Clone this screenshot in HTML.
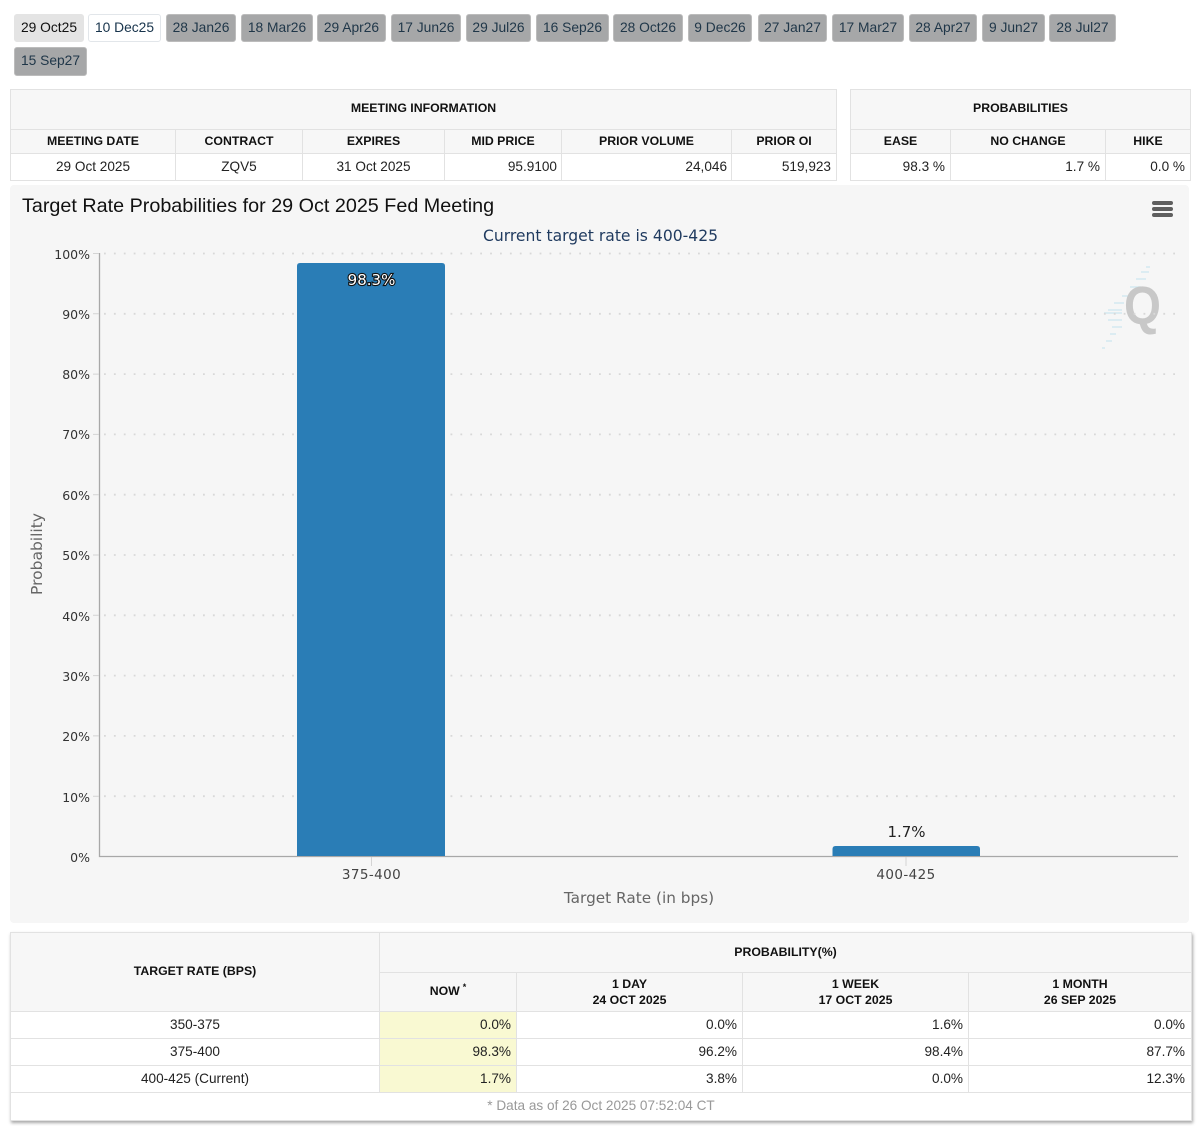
<!DOCTYPE html>
<html><head><meta charset="utf-8"><style>
html,body{margin:0;padding:0;background:#fff;width:1200px;height:1126px;overflow:hidden;font-family:"Liberation Sans",sans-serif;color:#111}
.t{position:absolute;box-sizing:border-box;height:28px;top:14px;border:1px solid #bcbcbc;border-radius:3px;background:#a6a7a8;color:#1f3648;font-size:13.8px;line-height:25px;text-align:center;white-space:nowrap}
.b{position:absolute;box-sizing:border-box;border:1px solid #e2e2e2;white-space:nowrap}
.h{background:#f7f7f7;font-weight:bold;font-size:12.3px;color:#111;text-align:center}
.d{background:#fff;font-size:13.6px;color:#222}
.r{text-align:right;padding-right:5px}
.c{text-align:center}
.y{background:#f9f9d2}
</style></head><body>
<div class="t" style="left:14px;width:70px;background:#e4e4e4;border-color:#e4e4e4;color:#111">29 Oct25</div>
<div class="t" style="left:88px;width:73px;background:#fff;border-color:#e2e6ea;color:#18344c">10 Dec25</div>
<div class="t" style="left:166px;width:70px">28 Jan26</div>
<div class="t" style="left:241px;width:72px">18 Mar26</div>
<div class="t" style="left:317px;width:69px">29 Apr26</div>
<div class="t" style="left:391px;width:70px">17 Jun26</div>
<div class="t" style="left:466px;width:65px">29 Jul26</div>
<div class="t" style="left:536px;width:73px">16 Sep26</div>
<div class="t" style="left:613px;width:70px">28 Oct26</div>
<div class="t" style="left:688px;width:64px">9 Dec26</div>
<div class="t" style="left:758px;width:69px">27 Jan27</div>
<div class="t" style="left:832px;width:72px">17 Mar27</div>
<div class="t" style="left:909px;width:68px">28 Apr27</div>
<div class="t" style="left:982px;width:63px">9 Jun27</div>
<div class="t" style="left:1049px;width:67px">28 Jul27</div>
<div class="t" style="left:14px;top:47px;width:73px;height:29px;line-height:26px">15 Sep27</div>

<div class="b h" style="left:10px;top:89px;width:827px;height:41px;line-height:36px">MEETING INFORMATION</div>
<div class="b h" style="left:10px;top:129px;width:166px;height:25px;line-height:23px">MEETING DATE</div>
<div class="b h" style="left:175px;top:129px;width:128px;height:25px;line-height:23px">CONTRACT</div>
<div class="b h" style="left:302px;top:129px;width:143px;height:25px;line-height:23px">EXPIRES</div>
<div class="b h" style="left:444px;top:129px;width:118px;height:25px;line-height:23px">MID PRICE</div>
<div class="b h" style="left:561px;top:129px;width:171px;height:25px;line-height:23px">PRIOR VOLUME</div>
<div class="b h" style="left:731px;top:129px;width:106px;height:25px;line-height:23px">PRIOR OI</div>
<div class="b d c" style="left:10px;top:153px;width:166px;height:28px;line-height:25px">29 Oct 2025</div>
<div class="b d c" style="left:175px;top:153px;width:128px;height:28px;line-height:25px">ZQV5</div>
<div class="b d c" style="left:302px;top:153px;width:143px;height:28px;line-height:25px">31 Oct 2025</div>
<div class="b d r" style="left:444px;top:153px;width:118px;height:28px;line-height:25px;padding-right:4px">95.9100</div>
<div class="b d r" style="left:561px;top:153px;width:171px;height:28px;line-height:25px;padding-right:4px">24,046</div>
<div class="b d r" style="left:731px;top:153px;width:106px;height:28px;line-height:25px">519,923</div>

<div class="b h" style="left:850px;top:89px;width:341px;height:41px;line-height:36px">PROBABILITIES</div>
<div class="b h" style="left:850px;top:129px;width:101px;height:25px;line-height:23px">EASE</div>
<div class="b h" style="left:950px;top:129px;width:156px;height:25px;line-height:23px">NO CHANGE</div>
<div class="b h" style="left:1105px;top:129px;width:86px;height:25px;line-height:23px">HIKE</div>
<div class="b d r" style="left:850px;top:153px;width:101px;height:28px;line-height:25px">98.3 %</div>
<div class="b d r" style="left:950px;top:153px;width:156px;height:28px;line-height:25px">1.7 %</div>
<div class="b d r" style="left:1105px;top:153px;width:86px;height:28px;line-height:25px">0.0 %</div>

<svg style="position:absolute;left:0;top:0" width="1200" height="1126" xmlns="http://www.w3.org/2000/svg">
<rect x="10" y="185" width="1179" height="738" rx="4" fill="#f6f6f6"/>
<text x="22" y="212" font-family="Liberation Sans" font-size="19.75" fill="#111">Target Rate Probabilities for 29 Oct 2025 Fed Meeting</text>
<text x="600.500" y="241" text-anchor="middle" font-family="DejaVu Sans" font-size="15.6" fill="#1f3a5f">Current target rate is 400-425</text>
<g fill="#5f5f5f"><rect x="1152" y="201" width="21" height="4" rx="2"/><rect x="1152" y="207" width="21" height="4" rx="2"/><rect x="1152" y="213" width="21" height="4" rx="2"/></g>
<g stroke="#d3e9f0" stroke-width="1.5"><path d="M1146 267h4M1141 272h8M1136 279h10M1130 287h11M1122 296h10M1114 303h10M1108 310h14M1104 313h18M1108 320h14M1112 327h10M1110 334h6M1106 341h6M1102 348h3"/></g>
<text transform="translate(1142.500 324) scale(.88 1)" text-anchor="middle" font-family="Liberation Sans" font-weight="bold" font-size="54" fill="#c8c8c8">Q</text>
<g stroke="#d8d8d8" stroke-width="1.800" stroke-dasharray="1.800 8.100" fill="none">
<path d="M104 253.500H1178M104 313.800H1178M104 374.100H1178M104 434.400H1178M104 494.700H1178M104 555H1178M104 615.300H1178M104 675.600H1178M104 735.900H1178M104 796.200H1178"/>
</g>
<path d="M99.500 253V856.500H1178" stroke="#a8a8a8" stroke-width="1.300" fill="none"/>
<path d="M93 253.500H99M93 313.800H99M93 374.100H99M93 434.400H99M93 494.700H99M93 555H99M93 615.300H99M93 675.600H99M93 735.900H99M93 796.200H99M371.500 857V866M906 857V866" stroke="#d4d4d4" fill="none"/>
<path d="M297 856V266q0-3 3-3H442q3 0 3 3V856Z" fill="#2a7db6"/>
<path d="M832.500 856V849q0-3 3-3H977q3 0 3 3V856Z" fill="#2a7db6"/>
<g font-family="DejaVu Sans" font-size="12.500" fill="#333" text-anchor="end">
<text x="90" y="259">100%</text><text x="90" y="319">90%</text><text x="90" y="379">80%</text><text x="90" y="439">70%</text><text x="90" y="500">60%</text><text x="90" y="560">50%</text><text x="90" y="621">40%</text><text x="90" y="681">30%</text><text x="90" y="741">20%</text><text x="90" y="802">10%</text><text x="90" y="862">0%</text>
</g>
<text x="371.500" y="285" text-anchor="middle" font-family="DejaVu Sans" font-size="15" fill="#fff" stroke="#111" stroke-width="2.200" paint-order="stroke">98.3%</text>
<text x="906.500" y="837" text-anchor="middle" font-family="DejaVu Sans" font-size="15" fill="#222">1.7%</text>
<text x="371.500" y="879" text-anchor="middle" font-family="DejaVu Sans" font-size="13.500" letter-spacing=".4" fill="#444">375-400</text>
<text x="906" y="879" text-anchor="middle" font-family="DejaVu Sans" font-size="13.500" letter-spacing=".4" fill="#444">400-425</text>
<text x="639" y="903" text-anchor="middle" font-family="DejaVu Sans" font-size="15.300" fill="#666">Target Rate (in bps)</text>
<text transform="translate(42 554) rotate(-90)" text-anchor="middle" font-family="DejaVu Sans" font-size="15.500" fill="#666">Probability</text>
</svg>

<div style="position:absolute;left:10px;top:932px;width:1182px;height:189px;background:#fff;box-shadow:1px 2px 3px rgba(0,0,0,.35)"></div>
<div class="b h" style="left:10px;top:932px;width:370px;height:80px;line-height:77px">TARGET RATE (BPS)</div>
<div class="b h" style="left:379px;top:932px;width:813px;height:41px;line-height:38px">PROBABILITY(%)</div>
<div class="b h" style="left:379px;top:972px;width:138px;height:40px;line-height:36px">NOW<sup style="font-size:9px;line-height:0;margin-left:3px">*</sup></div>
<div class="b h" style="left:516px;top:972px;width:227px;height:40px;line-height:15.500px;padding-top:4px">1 DAY<br>24 OCT 2025</div>
<div class="b h" style="left:742px;top:972px;width:227px;height:40px;line-height:15.500px;padding-top:4px">1 WEEK<br>17 OCT 2025</div>
<div class="b h" style="left:968px;top:972px;width:224px;height:40px;line-height:15.500px;padding-top:4px">1 MONTH<br>26 SEP 2025</div>

<div class="b d c" style="left:10px;top:1011px;width:370px;height:28px;line-height:25px">350-375</div>
<div class="b d r y" style="left:379px;top:1011px;width:138px;height:28px;line-height:25px">0.0%</div>
<div class="b d r" style="left:516px;top:1011px;width:227px;height:28px;line-height:25px">0.0%</div>
<div class="b d r" style="left:742px;top:1011px;width:227px;height:28px;line-height:25px">1.6%</div>
<div class="b d r" style="left:968px;top:1011px;width:224px;height:28px;line-height:25px;padding-right:6px">0.0%</div>

<div class="b d c" style="left:10px;top:1038px;width:370px;height:28px;line-height:25px">375-400</div>
<div class="b d r y" style="left:379px;top:1038px;width:138px;height:28px;line-height:25px">98.3%</div>
<div class="b d r" style="left:516px;top:1038px;width:227px;height:28px;line-height:25px">96.2%</div>
<div class="b d r" style="left:742px;top:1038px;width:227px;height:28px;line-height:25px">98.4%</div>
<div class="b d r" style="left:968px;top:1038px;width:224px;height:28px;line-height:25px;padding-right:6px">87.7%</div>

<div class="b d c" style="left:10px;top:1065px;width:370px;height:28px;line-height:25px">400-425 (Current)</div>
<div class="b d r y" style="left:379px;top:1065px;width:138px;height:28px;line-height:25px">1.7%</div>
<div class="b d r" style="left:516px;top:1065px;width:227px;height:28px;line-height:25px">3.8%</div>
<div class="b d r" style="left:742px;top:1065px;width:227px;height:28px;line-height:25px">0.0%</div>
<div class="b d r" style="left:968px;top:1065px;width:224px;height:28px;line-height:25px;padding-right:6px">12.3%</div>

<div class="b d c" style="left:10px;top:1092px;width:1182px;height:29px;line-height:25px;color:#999">* Data as of 26 Oct 2025 07:52:04 CT</div>
</body></html>
